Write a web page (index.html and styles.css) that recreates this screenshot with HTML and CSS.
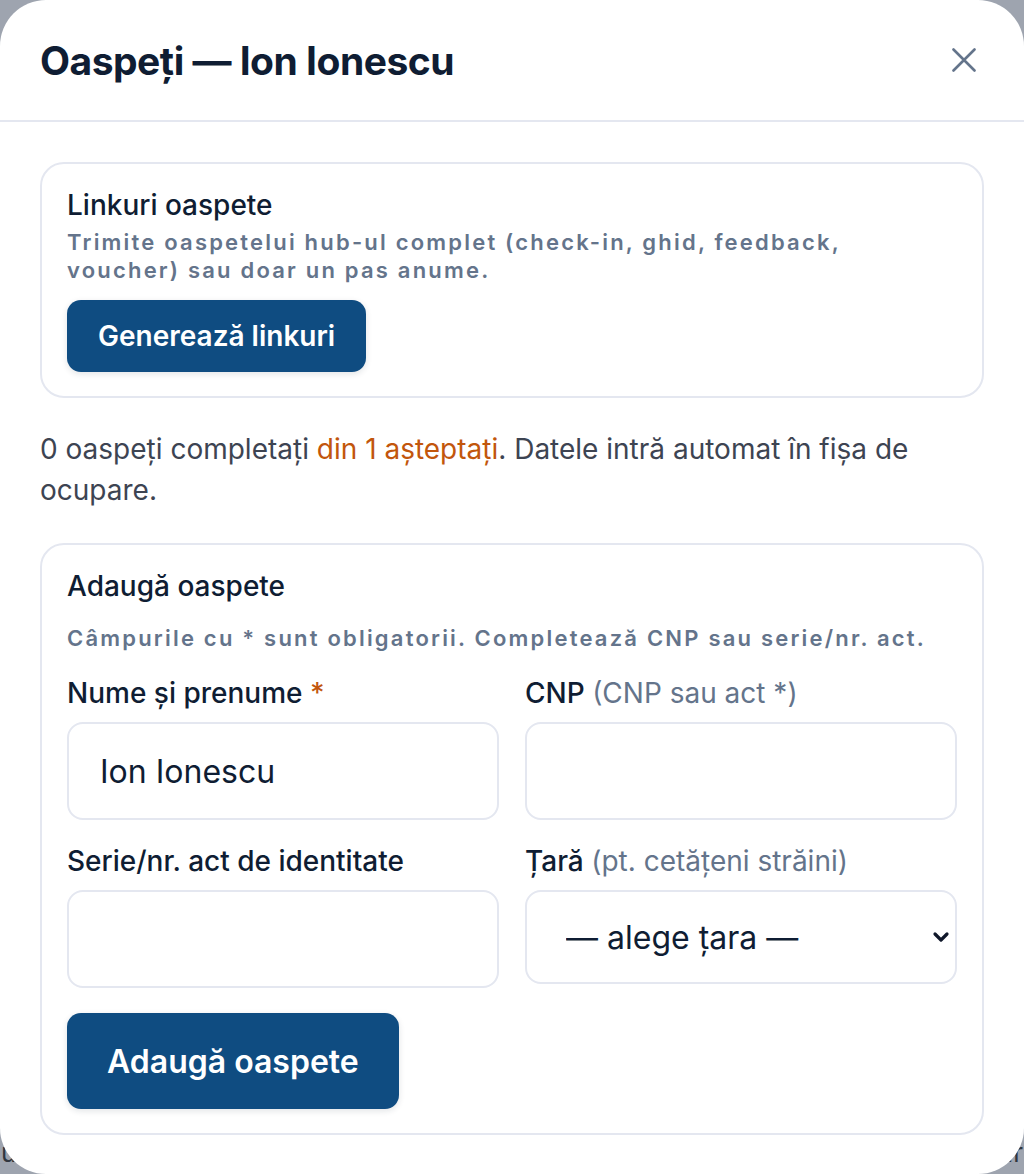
FILE: index.html
```html
<!DOCTYPE html>
<html lang="ro">
<head>
    <meta charset="UTF-8">
    <title>Oaspeți — Ion Ionescu</title>
    <link rel="stylesheet" href="styles.css">
</head>
<body>
    <div class="page-behind">
        <span>ur</span>
        <span>ar</span>
    </div>

    <div class="modal">
        <div class="modal-header">
            <h1>Oaspeți — Ion Ionescu</h1>
            <button class="close-btn" aria-label="Închide">
                <svg width="24" height="24" viewBox="0 0 24 24" fill="none" stroke="#64748b" stroke-width="2.6" stroke-linecap="round">
                    <path d="M1.5 1.5 L22.5 22.5 M22.5 1.5 L1.5 22.5"/>
                </svg>
            </button>
        </div>

        <div class="modal-body">
            <div class="card">
                <h2>Linkuri oaspete</h2>
                <p class="hint">Trimite oaspetelui hub-ul complet (check-in, ghid, feedback, voucher) sau doar un pas anume.</p>
                <button class="primary">Generează linkuri</button>
            </div>

            <p class="status">0 oaspeți completați <span class="warn">din 1 așteptați</span>. Datele intră automat în fișa de ocupare.</p>

            <div class="card">
                <h2>Adaugă oaspete</h2>
                <p class="hint note">Câmpurile cu * sunt obligatorii. Completează CNP sau serie/nr. act.</p>

                <div class="form-grid">
                    <label class="field">
                        <span class="label">Nume și prenume <span class="req">*</span></span>
                        <input type="text" value="Ion Ionescu">
                    </label>
                    <label class="field">
                        <span class="label">CNP <span class="muted">(CNP sau act *)</span></span>
                        <input type="text">
                    </label>
                    <label class="field">
                        <span class="label">Serie/nr. act de identitate</span>
                        <input type="text">
                    </label>
                    <label class="field">
                        <span class="label">Țară <span class="muted">(pt. cetățeni străini)</span></span>
                        <span class="select-wrap">
                            <select>
                                <option>— alege țara —</option>
                            </select>
                            <svg class="chevron" width="18" height="12" viewBox="0 0 18 12" fill="none" stroke="#0f172a" stroke-width="3.2" stroke-linecap="round" stroke-linejoin="round">
                                <path d="M3 3 L9 9 L15 3"/>
                            </svg>
                        </span>
                    </label>
                </div>

                <button class="primary big">Adaugă oaspete</button>
            </div>
        </div>
    </div>
</body>
</html>
```

FILE: styles.css
```css
* {
    box-sizing: border-box;
}
body {
    margin: 0;
    font-family: Inter, "Noto Sans", sans-serif;
    background: #9ea4af;
    color: #0f1d33;
    width: 1024px;
    height: 1174px;
    overflow: hidden;
    position: relative;
}
.page-behind {
    position: absolute;
    left: 1px;
    right: 1px;
    bottom: 6px;
    display: flex;
    justify-content: space-between;
    font-size: 26px;
    color: #30363f;
}
.modal {
    position: relative;
    width: 1024px;
    height: 1174px;
    background: #fff;
    border-radius: 46px;
}
.modal-header {
    height: 122px;
    padding: 0 40px;
    display: flex;
    align-items: center;
    justify-content: space-between;
    border-bottom: 2px solid #e4e7f0;
}
.modal-header h1 {
    margin: 0;
    font-size: 39px;
    font-weight: 700;
    letter-spacing: -0.5px;
    color: #0f1d33;
}
.close-btn {
    background: none;
    border: none;
    padding: 0;
    margin-right: 8px;
    cursor: pointer;
    display: flex;
}
.modal-body {
    padding: 40px 40px 0;
}
.card {
    border: 2px solid #e4e7f0;
    border-radius: 24px;
    padding: 24px 25px;
}
.card h2 {
    margin: 0;
    font-size: 28px;
    font-weight: 500;
    line-height: 34px;
    color: #0f1d33;
}
.hint {
    margin: 6px 0 16px;
    font-size: 22px;
    font-weight: 600;
    line-height: 28px;
    letter-spacing: 2.2px;
    color: #64748b;
}
.hint.note {
    margin: 21px 0 25px;
}
.primary {
    background: #0f4c81;
    color: #fff;
    border: none;
    border-radius: 14px;
    font-family: inherit;
    font-size: 28px;
    font-weight: 600;
    height: 72px;
    padding: 0 31px;
    box-shadow: 0 2px 6px rgba(15, 29, 51, 0.12);
    cursor: pointer;
}
.primary.big {
    height: 96px;
    padding: 0 40px;
    font-size: 32px;
    margin-top: 25px;
}
.status {
    margin: 31px 0 32px;
    font-size: 28px;
    line-height: 41px;
    color: #3d4452;
}
.warn {
    color: #c2560c;
}
.form-grid {
    display: grid;
    grid-template-columns: 1fr 1fr;
    column-gap: 26px;
    row-gap: 25px;
}
.field {
    display: flex;
    flex-direction: column;
    gap: 13px;
}
.label {
    font-size: 28px;
    font-weight: 500;
    line-height: 32px;
    color: #0f1d33;
}
.req {
    color: #c2560c;
}
.muted {
    font-weight: 400;
    color: #64748b;
}
input,
select {
    width: 100%;
    height: 98px;
    border: 2px solid #e4e7f0;
    border-radius: 16px;
    background: #fff;
    font-family: inherit;
    font-size: 32px;
    color: #0f1d33;
    padding: 0 31px;
    outline: none;
}
.select-wrap {
    position: relative;
    display: block;
}
select {
    height: 94px;
    appearance: none;
    -webkit-appearance: none;
    padding-left: 39px;
}
.chevron {
    position: absolute;
    right: 7px;
    top: 41px;
    pointer-events: none;
}
```
